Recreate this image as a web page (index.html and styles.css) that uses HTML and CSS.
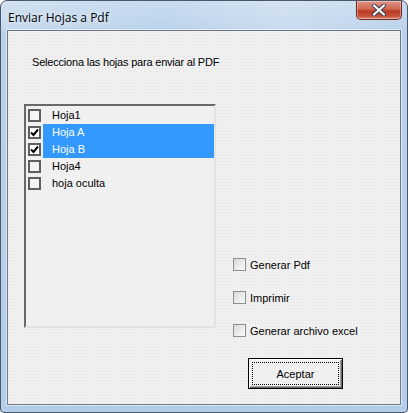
FILE: index.html
```html
<!DOCTYPE html>
<html>
<head>
<meta charset="utf-8">
<link rel="stylesheet" href="styles.css">
</head>
<body>
<div class="window">
  <div class="titlebar">
    <span class="title">Enviar Hojas a Pdf</span>
    <div class="close">
      <svg width="16" height="12" viewBox="0 0 16 12"><path d="M3 1.5 L13 10.5 M13 1.5 L3 10.5" stroke="#3a3f58" stroke-width="4.2" stroke-linecap="round"/><path d="M3 1.5 L13 10.5 M13 1.5 L3 10.5" stroke="#ffffff" stroke-width="2.2" stroke-linecap="round"/></svg>
    </div>
  </div>
  <div class="client">
    <div class="left">
      <div class="prompt">Selecciona las hojas para enviar al PDF</div>
      <div class="listbox">
        <div class="item"><span class="lbox"></span><span class="itext">Hoja1</span></div>
        <div class="item sel"><span class="lbox"><svg width="9" height="9" viewBox="0 0 9 9"><path d="M1 4.5 L3.5 7 L8 1.5" fill="none" stroke="#000" stroke-width="2"/></svg></span><span class="itext">Hoja A</span></div>
        <div class="item sel"><span class="lbox"><svg width="9" height="9" viewBox="0 0 9 9"><path d="M1 4.5 L3.5 7 L8 1.5" fill="none" stroke="#000" stroke-width="2"/></svg></span><span class="itext">Hoja B</span></div>
        <div class="item"><span class="lbox"></span><span class="itext">Hoja4</span></div>
        <div class="item"><span class="lbox"></span><span class="itext">hoja oculta</span></div>
      </div>
    </div>
    <div class="right">
      <label class="opt"><span class="cbox"></span>Generar Pdf</label>
      <label class="opt"><span class="cbox"></span>Imprimir</label>
      <label class="opt"><span class="cbox"></span>Generar archivo excel</label>
      <div class="button"><div class="focus">Aceptar</div></div>
    </div>
  </div>
</div>
</body>
</html>
```

FILE: styles.css
```css
html, body {
  margin: 0;
  padding: 0;
  background: #ffffff;
}
body {
  width: 408px;
  height: 413px;
  overflow: hidden;
  font-family: "Liberation Sans", Arial, sans-serif;
}
.window {
  box-sizing: border-box;
  width: 408px;
  height: 413px;
  border: 1px solid #4a5868;
  border-radius: 7px 7px 4px 4px;
  background: linear-gradient(180deg, #c9dcef 0px, #bcd2ea 30px, #b4cde8 100%);
  display: flex;
  flex-direction: column;
  overflow: hidden;
}
.titlebar {
  height: 29px;
  flex: none;
  display: flex;
  align-items: flex-start;
  justify-content: space-between;
  background: linear-gradient(90deg, rgba(255,255,255,0.15), rgba(255,255,255,0) 40%, rgba(255,255,255,0.2) 70%, rgba(255,255,255,0));
}
.title {
  font-family: "Open Sans", "Noto Sans", sans-serif;
  font-size: 12px;
  color: #000;
  padding: 9px 0 0 7px;
  line-height: 16px;
  text-shadow: 0 0 6px rgba(255,255,255,0.9);
}
.close {
  width: 44px;
  height: 18px;
  margin-right: 5px;
  border: 1px solid #6b2a24;
  border-top: none;
  border-radius: 0 0 5px 5px;
  background: linear-gradient(180deg, #e0988a 0%, #d0654f 45%, #b93a24 55%, #c8523a 85%, #e08f76 100%);
  box-shadow: inset 0 0 0 1px rgba(255,255,255,0.35);
  display: flex;
  align-items: center;
  justify-content: center;
}
.client {
  flex: none;
  height: 373px;
  margin: 0 6px 0 6px;
  border: 1px solid #6a7888;
  background-color: #f0f0f0;
  background-image: radial-gradient(circle, #e4e4e4 0.6px, transparent 0.9px);
  background-size: 3px 3px;
  display: flex;
  padding-left: 16px;
  box-shadow: 0 0 0 1px rgba(255,255,255,0.5);
}
.left {
  width: 192px;
  flex: none;
}
.prompt {
  font-size: 11px;
  line-height: 14px;
  letter-spacing: -0.2px;
  color: #000;
  margin-top: 24px;
  padding-left: 8px;
  white-space: nowrap;
}
.listbox {
  box-sizing: border-box;
  margin-top: 35px;
  width: 192px;
  height: 224px;
  border-top: 2px solid #696969;
  border-left: 2px solid #696969;
  border-right: 2px solid #e3e3e3;
  border-bottom: 2px solid #e3e3e3;
  background: #f0f0f0;
  padding-top: 1px;
}
.item {
  height: 17px;
  display: flex;
  align-items: center;
  font-size: 11px;
  color: #000;
}
.lbox {
  box-sizing: border-box;
  width: 13px;
  height: 13px;
  margin-left: 2px;
  border: 2px solid #5f5f5f;
  background: #f4f4f4;
  display: flex;
  align-items: center;
  justify-content: center;
  flex: none;
}
.itext {
  flex: 1;
  height: 17px;
  line-height: 17px;
  margin-left: 2px;
  padding-left: 9px;
}
.item.sel .itext {
  background: #3399ff;
  color: #fff;
}
.item.sel .lbox {
  background: #fff;
}
.right {
  margin-left: 17px;
  padding-top: 227px;
  display: flex;
  flex-direction: column;
}
.opt {
  display: flex;
  align-items: center;
  font-size: 11px;
  color: #000;
  height: 13px;
  margin-bottom: 20px;
  white-space: nowrap;
}
.cbox {
  box-sizing: border-box;
  width: 13px;
  height: 13px;
  border: 1px solid #8e8f8f;
  background: linear-gradient(135deg, #d8d8d8 0%, #eeeeee 60%, #fafafa 100%);
  margin-right: 4px;
  flex: none;
}
.button {
  box-sizing: border-box;
  margin-top: 1px;
  margin-left: 15px;
  width: 95px;
  height: 31px;
  border: 1px solid #000;
  background: #f0f0f0;
  box-shadow: inset 1px 1px 0 #ffffff, inset -1px -1px 0 #696969, inset -2px -2px 0 #a0a0a0;
  padding: 3px;
}
.focus {
  box-sizing: border-box;
  height: 100%;
  border: 1px dotted #000;
  display: flex;
  align-items: center;
  justify-content: center;
  font-size: 11px;
  color: #000;
}
```
